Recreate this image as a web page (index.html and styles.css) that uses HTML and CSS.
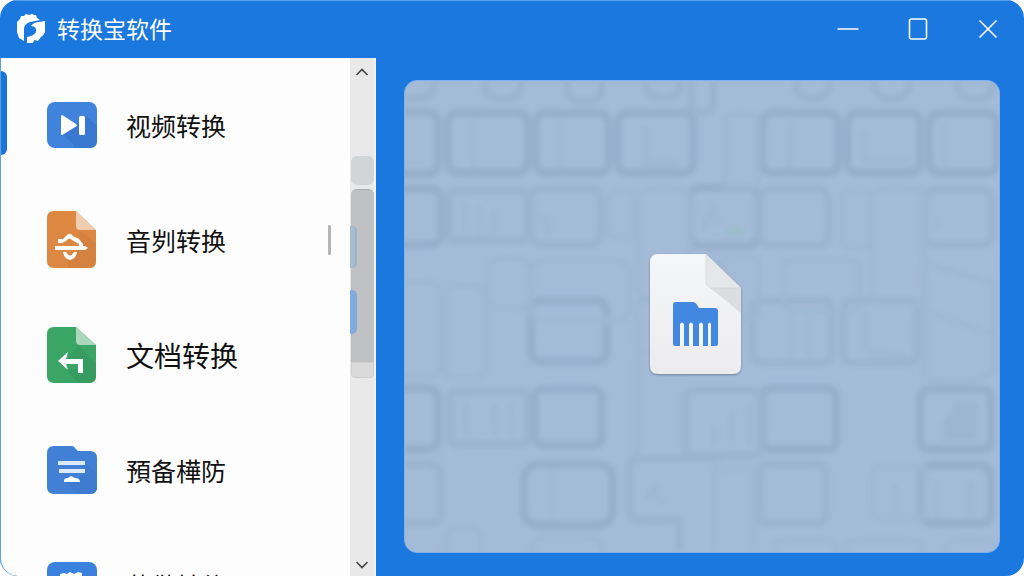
FILE: index.html
```html
<!DOCTYPE html>
<html lang="zh-CN">
<head>
    <meta charset="UTF-8">
    <meta name="viewport" content="width=device-width, initial-scale=1.0">
    <title>转换宝软件</title>
    <link rel="stylesheet" href="styles.css">
</head>
<body>
    <div class="window">
        <header class="titlebar">
            <svg class="logo" viewBox="0 0 30 30" aria-hidden="true">
                <path fill="#fff" d="M1 8 4 5 5 2 8 2 10 0 13 1 16 0 18 1 20 1 21 4 24 6 14 8Q8 10 8 15V27L3 24 1 18Z"/>
                <path fill="#fff" d="M15 12Q18 8 23 8L29 7V18Q28 21 25 23L22 27 18 26 17 29H11V23Q18 22 20 18Q21 12 15 12Z"/>
            </svg>
            <h1>转换宝软件</h1>
            <div class="controls">
                <button type="button" aria-label="最小化">
                    <svg width="22" height="22" viewBox="0 0 22 22"><path d="M.5 11h21"/></svg>
                </button>
                <button type="button" aria-label="最大化">
                    <svg width="22" height="22" viewBox="0 0 22 22"><rect x="2.500" y="1" width="17" height="20" rx="2"/></svg>
                </button>
                <button type="button" aria-label="关闭">
                    <svg width="22" height="22" viewBox="0 0 22 22"><path d="M2.500 2.500l17 17M19.500 2.500l-17 17"/></svg>
                </button>
            </div>
        </header>

        <div class="content">
            <aside class="sidebar">
                <nav class="menu">
                    <a class="item active" href="#video">
                        <svg class="icon" viewBox="0 0 52 60" aria-hidden="true">
                            <rect x="1" y="7" width="50" height="46" rx="8" fill="#3f83dc"/>
                            <path d="M17 40 28 50V53H44Q51 53 51 46V31L40 21Z" fill="#3878cf"/>
                            <path d="M15 21.500Q15 19 17 20.500L30 29Q32 30 30 31.500L17 39.500Q15 41 15 38.500Z" fill="#fff"/>
                            <rect x="33" y="21" width="6" height="19" rx="1.500" fill="#fff"/>
                        </svg>
                        <span>视频转换</span>
                    </a>
                    <a class="item" href="#audio">
                        <svg class="icon" viewBox="0 0 52 60" aria-hidden="true">
                            <path d="M8 1H30L50 20V51Q50 58 43 58H8Q1 58 1 51V8Q1 1 8 1Z" fill="#dc8843"/>
                            <path d="M32 19 50 34V51Q50 58 43 58H22V46L36 38Z" fill="#d58140"/>
                            <path d="M30 1 50 20H34Q30 20 30 16Z" fill="#f0cdb0"/>
                            <path d="M12 29 17 29 21 25Q24 22 27 26L33 29 37 34V37H33V34L26 30Q23 27 20 31L16 33 12 33Z" fill="#fff"/>
                            <path d="M9 36H39L42 38 39 40H9Z" fill="#fff"/>
                            <path d="M17 42H20Q24 49 28 42H31Q30 49 24 50Q18 49 17 42Z" fill="#fff"/>
                        </svg>
                        <span>音刿转换</span>
                        <i class="grip"></i>
                    </a>
                    <a class="item large" href="#document">
                        <svg class="icon" viewBox="0 0 52 60" aria-hidden="true">
                            <path d="M8 2H30L50 20V51Q50 58 43 58H8Q1 58 1 51V9Q1 2 8 2Z" fill="#3ba566"/>
                            <path d="M32 20 50 38V51Q50 58 43 58H32L20 44H35V34H22Z" fill="#379c5f"/>
                            <path d="M30 2 50 20H34Q30 20 30 16Z" fill="#a9d8bb"/>
                            <path d="M12 36 22 27 20 34H37V48H32V39H20L22 45Z" fill="#fff"/>
                        </svg>
                        <span>文档转换</span>
                    </a>
                    <a class="item" href="#backup">
                        <svg class="icon" viewBox="0 0 52 60" aria-hidden="true">
                            <path d="M8 6H26Q28 6 29 8L32 11H44Q51 11 51 18V47Q51 54 44 54H8Q1 54 1 47V13Q1 6 8 6Z" fill="#4280d5"/>
                            <path d="M39 23 51 34V47Q51 54 44 54H32L20 42 34 39Z" fill="#3e7acd"/>
                            <path d="M12 21H39V25H12ZM13 29H39V33H13Z" fill="#dce9fb"/>
                            <path d="M18 41Q18 38 22 38L25 36 29 38Q34 38 34 42H18Z" fill="#fff"/>
                        </svg>
                        <span>預备樺防</span>
                    </a>
                    <a class="item" href="#more">
                        <svg class="icon" viewBox="0 0 52 60" aria-hidden="true">
                            <rect x="1" y="7" width="50" height="46" rx="8" fill="#3a82de"/>
                            <path d="M14 19 18 18 21 19 24 17 28 19 32 17 36 18V32H14Z" fill="#fff"/>
                        </svg>
                        <span>草做转体</span>
                    </a>
                </nav>
                <div class="scrollbar">
                    <button type="button" aria-label="向上滚动">
                        <svg width="14" height="8" viewBox="0 0 14 8"><path d="M1.500 7 7 1.500 12.500 7"/></svg>
                    </button>
                    <div class="track">
                        <div class="block"></div>
                        <div class="thumb">
                            <i class="mark mark-pale"></i>
                            <i class="mark mark-blue"></i>
                        </div>
                        <div class="tail"></div>
                    </div>
                    <button class="down" type="button" aria-label="向下滚动">
                        <svg width="14" height="8" viewBox="0 0 14 8"><path d="M1.500 1 7 6.500 12.500 1"/></svg>
                    </button>
                </div>
            </aside>

            <main class="panel">
                <!-- faint tiles behind the drop area -->
                <svg class="pattern" viewBox="0 0 595 472" preserveAspectRatio="xMidYMid slice" aria-hidden="true">
                    <defs>
                        <filter id="soft"><feGaussianBlur stdDeviation="2.500"/></filter>
                    </defs>
                    <g filter="url(#soft)">
                        <g class="tiles strong">
                            <rect x="-30" y="31" width="63" height="62" rx="10"/>
                            <rect x="43" y="32" width="80" height="60" rx="10"/>
                            <rect x="131" y="32" width="73" height="60" rx="10"/>
                            <rect x="213" y="32" width="76" height="60" rx="10"/>
                            <rect x="358" y="32" width="76" height="60" rx="10"/>
                            <rect x="443" y="32" width="73" height="60" rx="10"/>
                            <rect x="525" y="32" width="68" height="60" rx="10"/>
                            <rect x="-30" y="108" width="66" height="56" rx="10"/>
                            <rect x="285" y="107" width="69" height="58" rx="10"/>
                            <rect x="126" y="220" width="76" height="61" rx="10"/>
                            <rect x="-30" y="308" width="63" height="61" rx="10"/>
                            <rect x="130" y="309" width="67" height="56" rx="8"/>
                            <rect x="119" y="384" width="89" height="61" rx="14"/>
                            <rect x="358" y="308" width="74" height="61" rx="8"/>
                            <rect x="516" y="309" width="71" height="60" rx="8"/>
                            <rect x="517" y="385" width="70" height="58" rx="10"/>
                        </g>
                        <g class="tiles">
                            <rect x="-20" y="-30" width="49" height="47" rx="14"/>
                            <rect x="80" y="-30" width="36" height="48" rx="14"/>
                            <rect x="163" y="-30" width="34" height="50" rx="10"/>
                            <rect x="241" y="-30" width="35" height="47" rx="14"/>
                            <rect x="287" y="-30" width="22" height="61" rx="6"/>
                            <rect x="392" y="-30" width="33" height="48" rx="14"/>
                            <rect x="470" y="-30" width="35" height="48" rx="14"/>
                            <rect x="553" y="-30" width="36" height="48" rx="14"/>
                            <rect x="44" y="110" width="79" height="50" rx="6"/>
                            <rect x="126" y="108" width="70" height="56" rx="10"/>
                            <rect x="355" y="108" width="69" height="57" rx="10"/>
                            <rect x="521" y="109" width="67" height="55" rx="10"/>
                            <rect x="348" y="220" width="79" height="62" rx="8"/>
                            <rect x="439" y="220" width="74" height="62" rx="8"/>
                            <rect x="45" y="311" width="78" height="53" rx="6"/>
                            <rect x="-30" y="384" width="66" height="59" rx="10"/>
                            <rect x="281" y="310" width="75" height="65" rx="6"/>
                            <rect x="355" y="384" width="67" height="59" rx="8"/>
                            <path d="M315 378H235Q225 378 225 388V430Q225 440 235 440H275V472"/>
                        </g>
                        <g class="tiles faint">
                            <rect x="233" y="108" width="52" height="110" rx="12"/>
                            <rect x="83" y="178" width="43" height="50" rx="12"/>
                            <rect x="126" y="180" width="99" height="60" rx="12"/>
                            <rect x="-30" y="202" width="66" height="94" rx="12"/>
                            <rect x="40" y="205" width="40" height="92" rx="8"/>
                            <rect x="205" y="111" width="25" height="46" rx="4"/>
                            <rect x="438" y="110" width="28" height="56" rx="6"/>
                            <rect x="468" y="108" width="52" height="115" rx="8"/>
                            <rect x="380" y="180" width="76" height="50" rx="6"/>
                            <rect x="317" y="177" width="37" height="60" rx="6"/>
                            <rect x="320" y="34" width="33" height="72" rx="4"/>
                            <path d="M520 182 590 203V290Q560 310 520 297ZM520 230 590 254"/>
                            <rect x="232" y="220" width="60" height="52" rx="8"/>
                            <path d="M232 272V378M310 472V388H350V472"/>
                            <rect x="469" y="386" width="52" height="52" rx="6"/>
                            <rect x="40" y="448" width="37" height="50" rx="12"/>
                            <rect x="126" y="458" width="72" height="50" rx="12"/>
                            <rect x="370" y="460" width="62" height="50" rx="8"/>
                            <rect x="442" y="460" width="76" height="50" rx="8"/>
                            <rect x="542" y="460" width="50" height="50" rx="8"/>
                            <path d="M68 38V88M156 38V88M240 45V82H275M385 40V88M460 50V80H505M541 45V85"/>
                            <path d="M60 122V152M75 125V152M88 130V152M133 138H143V155M298 150 309 125 314 145M533 135V150"/>
                            <path d="M387 228V275M405 235V275M463 228V270L505 277M62 320V355M90 325V355M106 325V355"/>
                            <path d="M148 390V438M242 420 250 405 258 425M310 345V365M328 330V365M345 325V365M533 400V435M567 400V435M491 405V430"/>
                        </g>
                        <path d="M538 360V345L552 322H574V360Z" fill="#9cb5d1"/>
                        <rect x="322" y="146" width="18" height="9" fill="#9bbccb"/>
                    </g>
                </svg>
                <svg class="file" viewBox="0 0 92 120" role="img" aria-label="文件">
                    <defs>
                        <linearGradient id="paper" x2="0" y2="1">
                            <stop offset="0" stop-color="#f5f6f8"/>
                            <stop offset="1" stop-color="#ececee"/>
                        </linearGradient>
                    </defs>
                    <path d="M8 0H56L91 34V112Q91 120 83 120H8Q0 120 0 112V8Q0 0 8 0Z" fill="url(#paper)"/>
                    <path d="M60 34H91V59Z" fill="#dcdde0"/>
                    <path d="M56 0 91 34H62Q56 33 56 27Z" fill="#e6e7ea" stroke="#cfd1d4" stroke-width=".6"/>
                    <path d="M26 48H43Q46 48 49 54H65Q68 54 68 57V90Q68 92 66 92H25Q23 92 23 90V51Q23 48 26 48Z" fill="#4388e0"/>
                    <path d="M30 92V70Q32 67 34 70V92ZM39 92V70Q41 67 43 70V92ZM49 92V70Q51 67 53 70V92ZM58 92V70Q60 67 61 70V92Z" fill="#f4f5f7"/>
                </svg>
            </main>
        </div>
    </div>
</body>
</html>
```

FILE: styles.css
```css
* {
    box-sizing: border-box;
}
body {
    margin: 0;
    background: #fff;
    color: #111;
    font-family: "Noto Sans CJK SC", "Noto Sans", sans-serif;
}
button {
    padding: 0;
    border: none;
    background: none;
    cursor: pointer;
}
.window {
    display: flex;
    flex-direction: column;
    height: 100vh;
    background: #1a78df;
    border-radius: 18px;
    overflow: hidden;
}

/* title bar */
.titlebar {
    display: flex;
    align-items: center;
    flex: none;
    height: 58px;
    padding: 0 1px 2px 16px;
    border-top: 1px solid #5ba0ea;
    color: #fff;
}
.logo {
    width: 30px;
    height: 30px;
}
.titlebar h1 {
    margin: 0 0 2px 11px;
    font-size: 23px;
    line-height: 32px;
    font-weight: 400;
}
.controls {
    display: flex;
    align-self: stretch;
    margin-left: auto;
}
.controls button {
    display: flex;
    align-items: center;
    justify-content: center;
    width: 70px;
}
.controls svg {
    fill: none;
    stroke: #fff;
    stroke-width: 1.6;
}
.content {
    display: flex;
    flex: 1;
    min-height: 0;
}

/* sidebar */
.sidebar {
    display: flex;
    flex: none;
    width: 376px;
    background: #fdfdfd;
    border-left: 1px solid #5aa4dc;
    border-bottom-left-radius: 18px;
    overflow: hidden;
}
.menu {
    flex: 1;
    padding-top: 9px;
    overflow: hidden;
}
.item {
    position: relative;
    display: flex;
    align-items: center;
    height: 115px;
    padding: 0 19px 0 45px;
    color: inherit;
    font-size: 25px;
    line-height: 36px;
    text-decoration: none;
}
.item.large {
    font-size: 28px;
}
.item.active::before {
    content: "";
    position: absolute;
    left: 0;
    top: 4px;
    width: 6px;
    height: 84px;
    background: #1a74dc;
    border-radius: 0 6px 6px 0;
}
.icon {
    width: 52px;
    height: 60px;
    margin-right: 28px;
}
.grip {
    width: 3px;
    height: 30px;
    margin-left: auto;
    background: #b4b5b7;
    border-radius: 1px;
}

/* scrollbar */
.scrollbar {
    display: flex;
    flex-direction: column;
    width: 26px;
    background: #e9e9ea;
    border-right: 2px solid #f3f1f2;
}
.scrollbar button {
    display: flex;
    align-items: center;
    justify-content: center;
    height: 28px;
}
.scrollbar .down {
    height: 22px;
}
.scrollbar svg {
    fill: none;
    stroke: #444;
    stroke-width: 1.6;
}
.track {
    flex: 1;
    padding: 70px 0 0 1px;
}
.block {
    height: 29px;
    margin-bottom: 4px;
    background: #d3d4d5;
    border-radius: 6px;
}
.thumb {
    position: relative;
    height: 173px;
    background: #c0c1c3;
    border-top: 1px solid #abacae;
    border-radius: 6px 6px 0 0;
}
.mark {
    position: absolute;
    left: -1px;
    width: 7px;
    border-radius: 0 5px 5px 0;
}
.mark-pale {
    top: 36px;
    height: 42px;
    background: #a9bccb;
    border-right: 2px solid #98b5cd;
}
.mark-blue {
    top: 100px;
    height: 44px;
    background: #82abdd;
}
.tail {
    height: 16px;
    background: #dadadb;
    border: 1px solid #cfcfd0;
    border-radius: 0 0 4px 4px;
}

/* drop area */
.panel {
    position: relative;
    display: flex;
    align-items: center;
    justify-content: center;
    flex: 1;
    margin: 22px 24px 23px 28px;
    padding: 0 12px 5px 0;
    background: #a3bbd7;
    border: 1px solid #7fb2ee;
    border-radius: 13px;
    overflow: hidden;
}
.pattern {
    position: absolute;
    inset: 0;
    width: 100%;
    height: 100%;
}
.tiles {
    fill: none;
    stroke: #9bb3cf;
    stroke-width: 7;
}
.strong {
    stroke: #96afcb;
    stroke-width: 8;
}
.faint {
    stroke: #9eb7d3;
    stroke-width: 6;
}
.file {
    position: relative;
    width: 92px;
    height: 120px;
    filter: drop-shadow(0 1px 1px rgba(60, 80, 110, 0.5));
}
```
